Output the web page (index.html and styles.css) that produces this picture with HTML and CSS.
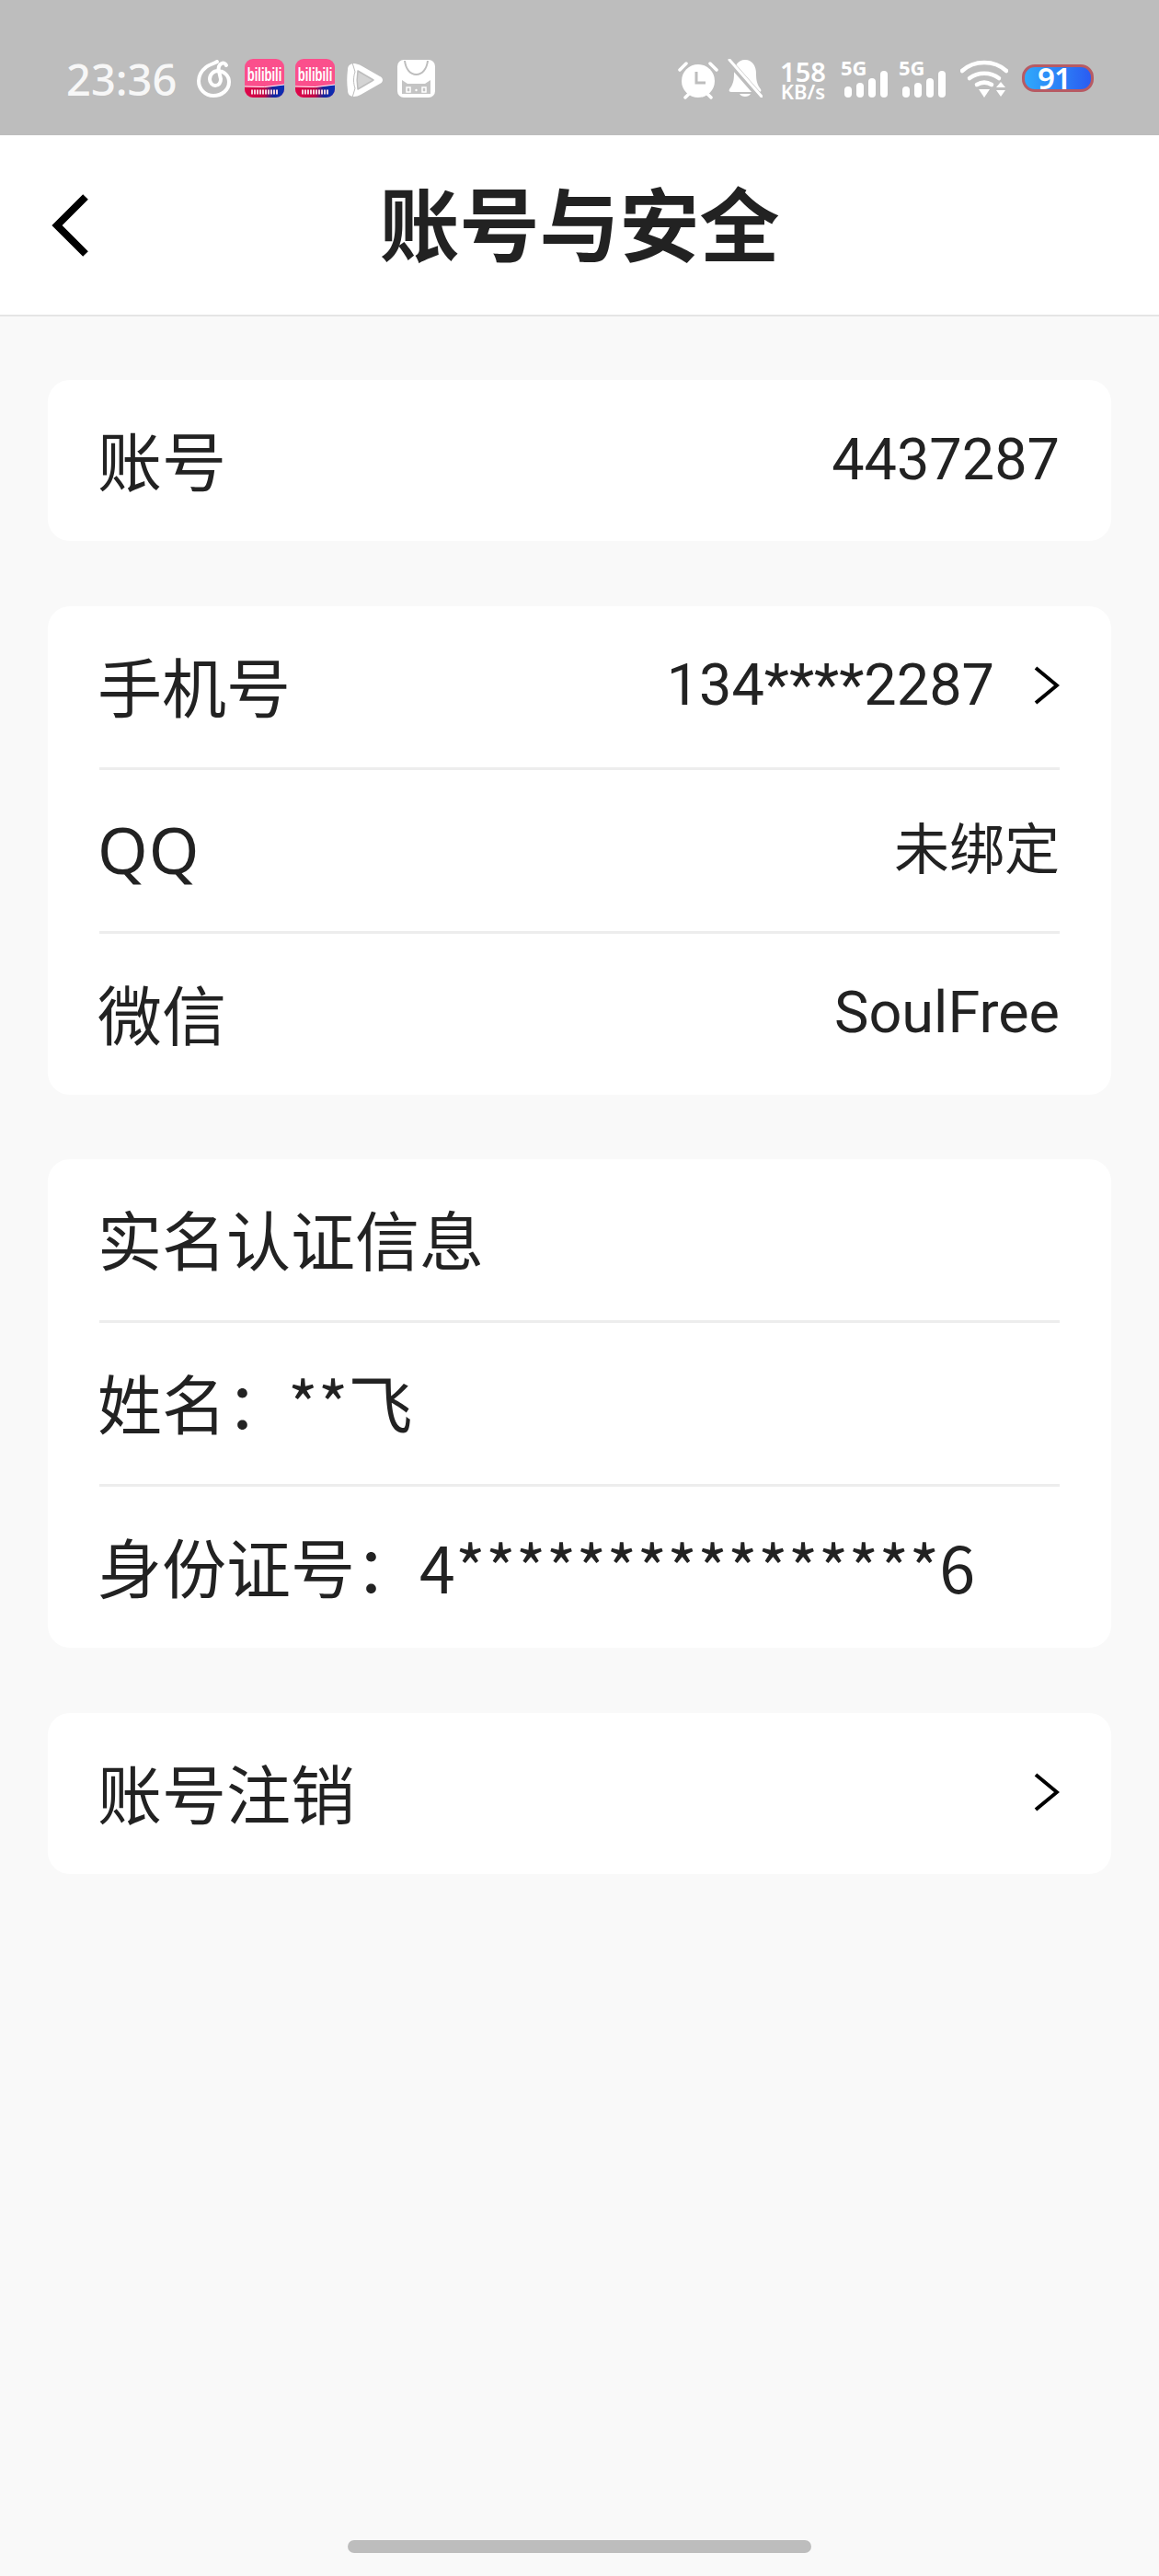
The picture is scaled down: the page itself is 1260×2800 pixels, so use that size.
FILE: index.html
```html
<!DOCTYPE html>
<html lang="zh-CN">
<head>
    <meta charset="UTF-8">
    <meta name="viewport" content="width=device-width, initial-scale=1.0">
    <title>账号与安全</title>
    <link rel="stylesheet" href="styles.css">
</head>
<body>
<div class="status-bar">
    <div class="status-left">
        <span class="time">23:36</span>
        <svg class="ic-netease" viewBox="0 0 38 42"><path d="M22 3c-3 2-8 3-12 6C5 13 2 18 2 24c0 9 7 16 16 16s17-6 17-15c0-7-6-12-12-12-5 0-9 4-9 9 0 4 3 7 6 7 4 0 6-3 6-7l-2-9c-1-3 0-7 3-8 2-1 4 0 5 2" fill="none" stroke="#fff" stroke-width="4" stroke-linecap="round"/></svg>
        <svg class="ic-bili" viewBox="0 0 43 42"><defs><linearGradient id="bb" x1="0" x2="1" y1="0" y2="0"><stop offset="0" stop-color="#e0064a"/><stop offset=".5" stop-color="#c00845"/><stop offset=".72" stop-color="#14259c"/><stop offset="1" stop-color="#0b2fb5"/></linearGradient></defs><rect width="43" height="42" rx="9" fill="#fb4f8c"/><path d="M0 30q22 2 43-2v5a9 9 0 0 1-9 9H9a9 9 0 0 1-9-9z" fill="url(#bb)"/><path d="M0 30q22 2 43-2" fill="none" stroke="#fff" stroke-width="1"/><text text-anchor="middle" transform="translate(21.500 24) scale(1 1.600)" class="bili-text">bilibili</text><path d="M7 36h29" stroke="#f9d3de" stroke-width="5" stroke-dasharray="2 1"/></svg>
        <svg class="ic-bili" viewBox="0 0 43 42"><rect width="43" height="42" rx="9" fill="#fb4f8c"/><path d="M0 30q22 2 43-2v5a9 9 0 0 1-9 9H9a9 9 0 0 1-9-9z" fill="url(#bb)"/><path d="M0 30q22 2 43-2" fill="none" stroke="#fff" stroke-width="1"/><text text-anchor="middle" transform="translate(21.500 24) scale(1 1.600)" class="bili-text">bilibili</text><path d="M7 36h29" stroke="#f9d3de" stroke-width="5" stroke-dasharray="2 1"/></svg>
        <svg class="ic-video" viewBox="0 0 40 40"><path d="M8 2C4 2 1 4 1 9c-1 7-1 15 0 22 0 5 3 7 7 7 2 0 5-1 7-2l21-12c4-2 4-6 0-8L15 4C13 3 10 2 8 2z" fill="#fff"/><path d="M12 10c-1 6-1 14 0 20l17-10z" fill="#d4d4d4" stroke="#bdbdbd" stroke-width="1.500" stroke-linejoin="round"/><path d="M6 1l3 10c-2 6-2 12 0 18L6 39" fill="none" stroke="#bdbdbd" stroke-width="1"/></svg>
        <svg class="ic-shop" viewBox="0 0 41 41"><rect width="41" height="41" rx="7" fill="#fff"/><path d="M8 1c1 9 6 15 12.500 15S32 10 33 1" fill="none" stroke="#bdbdbd" stroke-width="2"/><path d="M5 37V22l6 4h19l6-4v15z" fill="#c4c4c4"/><rect x="10" y="30" width="4" height="5" fill="none" stroke="#fff" stroke-width="1.500"/><rect x="27" y="30" width="4" height="5" fill="none" stroke="#fff" stroke-width="1.500"/><circle cx="20.500" cy="33" r="1.200" fill="#fff"/></svg>
    </div>
    <div class="status-right">
        <svg class="ic-alarm" viewBox="0 0 44 44"><g fill="none" stroke="#fff" stroke-linecap="round"><path d="M2 12l7-7M42 12l-7-7" stroke-width="3.500"/><path d="M8 42l4-4M36 42l-4-4" stroke-width="3.500"/></g><circle cx="22" cy="24" r="18" fill="#fff"/><path d="M20 14v12h10" fill="none" stroke="#bdbdbd" stroke-width="3"/></svg>
        <svg class="ic-bell" viewBox="0 0 38 42"><path d="M19 1c-8 0-12 7-12 15 0 7-1 12-5 17-1 2 0 3 2 3h30c2 0 3-1 2-3-4-5-5-10-5-17C31 8 27 1 19 1z" fill="#fff"/><path d="M13 38c2 4 10 4 12 0z" fill="#fff"/><path d="M0 1l36 41" stroke="#bdbdbd" stroke-width="7"/><path d="M2 1l35 40" stroke="#fff" stroke-width="3" stroke-linecap="round"/></svg>
        <div class="net-speed"><span class="speed-num">158</span><span class="speed-unit">KB/s</span></div>
        <div class="signal"><span class="sig-label">5G</span><div class="bars"><i class="b1"></i><i class="b2"></i><i class="b3"></i><i class="b4"></i></div></div>
        <div class="signal"><span class="sig-label">5G</span><div class="bars"><i class="b1"></i><i class="b2"></i><i class="b3"></i><i class="b4"></i></div></div>
        <svg class="ic-wifi" viewBox="0 0 52 42"><g fill="none" stroke="#fff" stroke-width="4.500" stroke-linecap="round"><path d="M2 13C15 1 37 1 50 13"/><path d="M10 21c9-7 23-7 32 0"/><path d="M18 28c5-3 11-3 16 0"/></g><path d="M20 33h12l-6 9z" fill="#fff"/><path d="M44 25l5 6H39zM44 41l5-7H39z" fill="#fff"/></svg>
        <div class="battery"><span>91</span></div>
    </div>
</div>

<header class="nav">
    <svg class="back" viewBox="0 0 40 68"><path d="M37 3L6 34l31 31" fill="none" stroke="#000" stroke-width="8"/></svg>
    <h1>账号与安全</h1>
    <span></span>
</header>

<main class="content">
    <section class="card">
        <div class="row"><span>账号</span><span class="value">4437287</span></div>
    </section>

    <section class="card">
        <div class="row">
            <span>手机号</span>
            <span class="row-right"><span class="value">134****2287</span>
                <svg class="arrow" viewBox="0 0 28 42"><path d="M2 2l23 19L2 40" fill="none" stroke="#000" stroke-width="4"/></svg>
            </span>
        </div>
        <div class="divider"></div>
        <div class="row"><span class="qq">QQ</span><span class="value cjk">未绑定</span></div>
        <div class="divider"></div>
        <div class="row"><span>微信</span><span class="value">SoulFree</span></div>
    </section>

    <section class="card">
        <div class="row"><span>实名认证信息</span></div>
        <div class="divider"></div>
        <div class="row"><span>姓名：<span class="name-mask">**飞</span></span></div>
        <div class="divider"></div>
        <div class="row"><span>身份证号：<span class="id-num">4****************6</span></span></div>
    </section>

    <section class="card">
        <div class="row">
            <span>账号注销</span>
            <svg class="arrow" viewBox="0 0 28 42"><path d="M2 2l23 19L2 40" fill="none" stroke="#000" stroke-width="4"/></svg>
        </div>
    </section>
</main>

<div class="home-bar"></div>
</body>
</html>
```

FILE: styles.css
```css
body {
    margin: 0;
    width: 1260px;
    height: 2800px;
    position: relative;
    overflow: hidden;
    background-color: #f9f9f9;
    font-family: "Noto Sans CJK SC", "Noto Sans", sans-serif;
    color: #222;
}

.status-bar {
    height: 147px;
    background-color: #bdbdbd;
    box-sizing: border-box;
    padding: 64px 72px 0 72px;
    display: flex;
    justify-content: space-between;
    align-items: flex-start;
    color: #fff;
}

.status-left, .status-right {
    display: flex;
    align-items: flex-start;
}

.time {
    font-family: "Noto Sans", sans-serif;
    font-size: 47px;
    font-weight: 500;
    line-height: 44px;
    margin-right: 22px;
    color: #f7f7f7;
}

.ic-netease { width: 38px; height: 42px; margin-right: 14px; }
.ic-bili { width: 43px; height: 42px; margin-right: 12px; }
.ic-video { width: 40px; height: 40px; margin: 3px 15px 0 1px; }
.ic-shop { width: 41px; height: 41px; margin-top: 1px; }

.bili-text {
    font-family: "Liberation Sans", sans-serif;
    font-size: 13px;
    font-weight: 700;
    fill: #fff;
}

.ic-alarm { width: 44px; height: 44px; margin-right: 10px; }
.ic-bell { width: 38px; height: 42px; margin-right: 18px; }

.net-speed {
    width: 52px;
    display: flex;
    flex-direction: column;
    align-items: center;
    font-family: "Noto Sans", sans-serif;
    font-weight: 600;
    margin-right: 19px;
}

.speed-num { font-size: 29px; line-height: 27px; }
.speed-unit { font-size: 22px; line-height: 17px; }

.signal {
    width: 47px;
    height: 42px;
    margin-right: 16px;
    position: relative;
    display: flex;
    justify-content: flex-end;
    align-items: flex-end;
}

.sig-label {
    position: absolute;
    left: -4px;
    top: -2px;
    font-family: "Noto Sans", sans-serif;
    font-size: 22px;
    line-height: 22px;
    font-weight: 700;
}

.bars {
    display: flex;
    align-items: flex-end;
    gap: 5px;
}

.bars i {
    display: block;
    width: 8px;
    background-color: #fff;
    border-radius: 4px;
}

.bars .b1 { height: 12px; }
.bars .b2 { height: 16px; }
.bars .b3 { height: 21px; }
.bars .b4 { height: 29px; }

.ic-wifi { width: 52px; height: 42px; margin-right: 15px; }

.battery {
    width: 78px;
    height: 30px;
    margin-top: 6px;
    margin-right: -1px;
    box-sizing: border-box;
    border: 3px solid #b75a63;
    border-radius: 14px;
    background: linear-gradient(90deg, #2fa9fb, #2a5cf2);
    display: flex;
    justify-content: center;
    align-items: center;
    padding-right: 8px;
}

.battery span {
    font-family: "Noto Sans", sans-serif;
    font-size: 33px;
    font-weight: 600;
    letter-spacing: -1px;
    line-height: 24px;
    color: #fff;
}

.nav {
    height: 197px;
    box-sizing: border-box;
    background-color: #fff;
    border-bottom: 2px solid #e5e5e5;
    display: grid;
    grid-template-columns: 1fr auto 1fr;
    align-items: center;
    padding: 0 56px;
}

.nav h1 {
    margin: 0 0 8px;
    font-size: 87px;
    font-weight: 700;
    line-height: 1;
    color: #222;
}

.back {
    width: 40px;
    height: 68px;
}

.content {
    padding: 69px 52px 0;
    display: flex;
    flex-direction: column;
    gap: 70.5px;
}

.card {
    background-color: #fff;
    border-radius: 24px;
}

.row {
    height: 175px;
    box-sizing: border-box;
    padding: 0 54px 3px;
    display: flex;
    justify-content: space-between;
    align-items: center;
    font-size: 70px;
    line-height: 1;
}

.value {
    font-family: Roboto, sans-serif;
    font-size: 63px;
    padding: 0 2px 0 0;
}

.value.cjk {
    font-family: "Noto Sans CJK SC", sans-serif;
    font-size: 60px;
    padding-bottom: 8px;
}

.qq {
    font-family: "Noto Sans", sans-serif;
    letter-spacing: 1px;
}

.name-mask {
    margin-left: -3px;
}

.id-num {
    letter-spacing: 0.2px;
}

.row-right {
    display: flex;
    align-items: center;
    gap: 41px;
}

.divider {
    height: 3px;
    margin: 0 56px;
    background-color: #ededed;
}

.arrow {
    width: 28px;
    height: 42px;
    margin-right: 2px;
}

.home-bar {
    position: absolute;
    left: 378px;
    top: 2761px;
    width: 504px;
    height: 14px;
    border-radius: 7px;
    background-color: #bdbdbd;
}
```
